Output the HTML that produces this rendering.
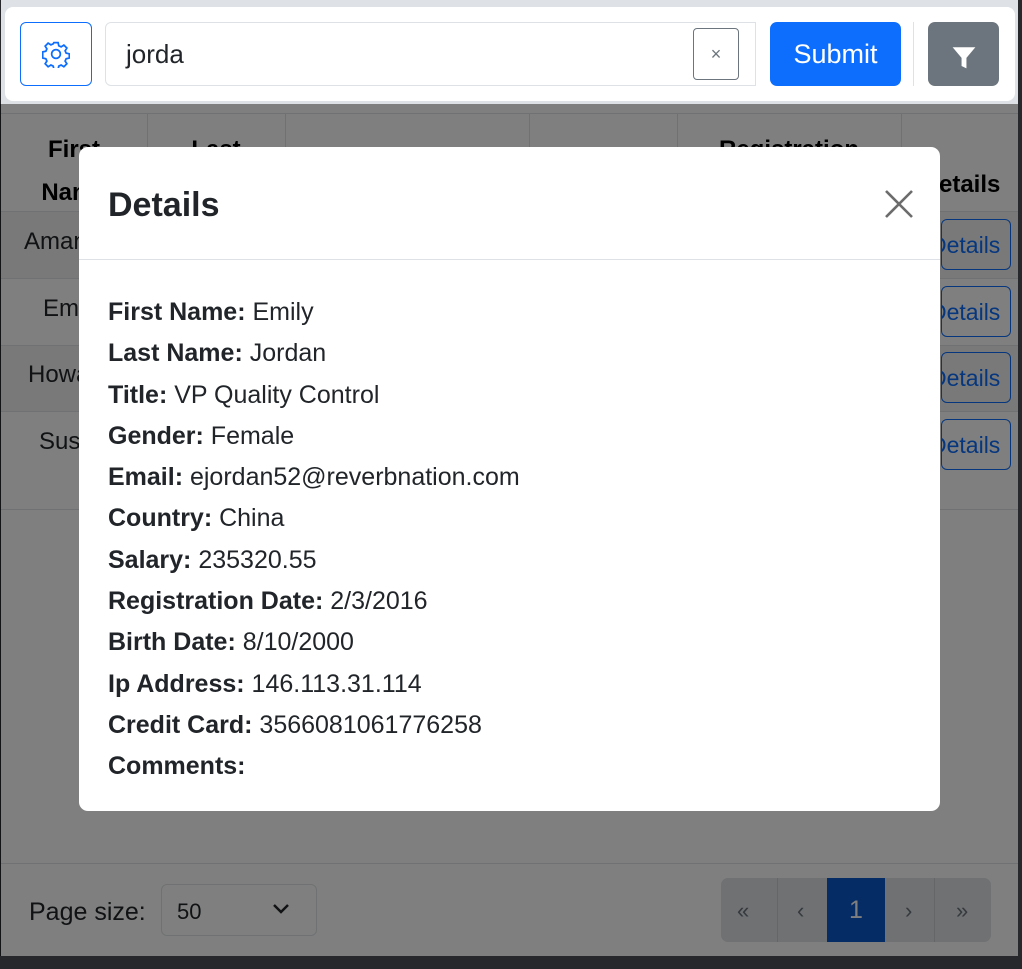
<!DOCTYPE html>
<html><head><meta charset="utf-8"><style>
*{box-sizing:border-box;margin:0;padding:0}
body{width:1022px;height:969px;background:#26282b;font-family:"Liberation Sans",sans-serif;position:relative;overflow:hidden}
.page{position:absolute;left:1px;top:0;width:1017px;height:956px;background:#fff}
.top{position:absolute;left:0;top:0;width:1017px;height:104px;background:#dee2e6;z-index:5}
.topin{position:absolute;left:4px;top:7px;right:3px;height:94px;background:#fff;border-radius:8px}
.abs{position:absolute}
.tbl .v{position:absolute;top:113px;height:98px;width:1px;background:#dee2e6}
.h{position:absolute;left:0;width:1017px;height:1px;background:#dee2e6}
.th{position:absolute;font-weight:bold;font-size:24px;color:#000;text-align:center}
.td{position:absolute;font-size:24px;color:#212529}
.btn{position:absolute;left:940px;width:70px;height:51px;border:1px solid #0d6efd;border-radius:6px;color:#0d6efd;font-size:23px;padding:12px 0 0 0;overflow:hidden;text-indent:-12px}
.ov{position:absolute;left:0;top:104px;width:1018px;height:852px;background:rgba(0,0,0,.5)}
.modal{position:absolute;left:79px;top:147px;width:861px;height:664px;background:#fff;border-radius:9px}
.modal h5{position:absolute;left:29px;top:39px;font-size:34px;font-weight:bold;color:#212529}
.modal .line{position:absolute;left:0;top:112px;width:100%;height:1px;background:#dee2e6}
.body{position:absolute;left:29px;top:145px;font-size:25px;line-height:41.3px;color:#212529}
.body b{font-weight:bold}
</style></head><body>
<div class="page">
  <div class="top"><div class="topin">
    <div class="abs" style="left:15px;top:15px;width:72px;height:64px;border:1px solid #0d6efd;border-radius:6px"></div>
    <svg class="abs" style="left:37px;top:33px" width="28" height="28" viewBox="0 0 16 16" fill="none" stroke="#0d6efd" stroke-width="1"><circle cx="8" cy="8" r="2.5"/><path d="M6.8 1.5h2.4l.4 1.8 1.3.6 1.6-1 1.7 1.7-1 1.6.6 1.3 1.8.4v2.4l-1.8.4-.6 1.3 1 1.6-1.7 1.7-1.6-1-1.3.6-.4 1.8H6.8l-.4-1.8-1.3-.6-1.6 1-1.7-1.7 1-1.6-.6-1.3-1.8-.4V6.8l1.8-.4.6-1.3-1-1.6 1.7-1.7 1.6 1 1.3-.6z"/></svg>
    <div class="abs" style="left:100px;top:15px;width:651px;height:64px;border:1px solid #dee2e6;border-radius:6px 0 0 6px"></div>
    <div class="abs" style="left:121px;top:32px;font-size:26px;color:#212529">jorda</div>
    <div class="abs" style="left:688px;top:21px;width:46px;height:52px;border:1px solid #6c757d;border-radius:4px;color:#6c757d;font-size:18px;text-align:center;line-height:50px">×</div>
    <div class="abs" style="left:765px;top:15px;width:131px;height:64px;background:#0d6efd;border-radius:7px;color:#fff;font-size:27px;text-align:center;line-height:64px">Submit</div>
    <div class="abs" style="left:908px;top:15px;width:1px;height:64px;background:#dee2e6"></div>
    <div class="abs" style="left:923px;top:15px;width:71px;height:64px;background:#6c757d;border-radius:7px"></div>
    <svg class="abs" style="left:946px;top:37px" width="26" height="26" viewBox="0 0 16 16"><path d="M1 2h14l-5.5 6.5V15l-3-1.5V8.5z" fill="#fff"/></svg>
  </div></div>
  <div class="tbl">
    <div class="h" style="top:113px"></div>
    <div class="v" style="left:146px"></div><div class="v" style="left:284px"></div><div class="v" style="left:528px"></div><div class="v" style="left:676px"></div><div class="v" style="left:900px"></div>
    <div class="th" style="left:0;width:146px;top:128px;line-height:43px">First<br>Name</div>
    <div class="th" style="left:146px;width:138px;top:128px;line-height:43px">Last<br>Name</div>
    <div class="th" style="left:676px;width:224px;top:128px;line-height:43px">Registration<br>Date</div>
    <div class="th" style="left:900px;width:120px;top:171px">Details</div>
    <div class="h" style="top:211px"></div>
    <div class="abs" style="left:0;top:212px;width:1017px;height:66px;background:#f2f2f2"></div>
    <div class="h" style="top:278px"></div>
    <div class="abs" style="left:0;top:346px;width:1017px;height:65px;background:#f2f2f2"></div>
    <div class="h" style="top:345px"></div><div class="h" style="top:411px"></div><div class="h" style="top:509px"></div>
    <div class="td" style="left:23px;top:228px">Amanda</div>
    <div class="td" style="left:42px;top:295px">Emily</div>
    <div class="td" style="left:27px;top:361px">Howard</div>
    <div class="td" style="left:38px;top:428px">Susan</div>
    <div class="btn" style="top:219px">Details</div>
    <div class="btn" style="top:286px">Details</div>
    <div class="btn" style="top:352px">Details</div>
    <div class="btn" style="top:419px">Details</div>
    <div class="h" style="top:863px"></div>
    <div class="td" style="left:28px;top:898px;font-size:25px">Page size:</div>
    <div class="abs" style="left:160px;top:884px;width:156px;height:52px;border:1px solid #dee2e6;border-radius:6px;font-size:22px;padding:14px 0 0 15px;color:#212529">50</div>
    <svg class="abs" style="left:270px;top:902px" width="20" height="14" viewBox="0 0 20 14"><path d="M3 3l7 7 7-7" stroke="#212529" stroke-width="2.5" fill="none"/></svg>
    <div class="abs" style="left:720px;top:878px;width:270px;height:64px;border:1px solid #dee2e6;border-radius:7px;background:#dee2e6"></div>
    <div class="abs" style="left:776px;top:878px;width:1px;height:64px;background:#c8ccd0"></div>
    <div class="abs" style="left:933px;top:878px;width:1px;height:64px;background:#c8ccd0"></div>
    <div class="abs" style="left:826px;top:878px;width:58px;height:64px;background:#0a58ca;color:#fff;font-size:25px;text-align:center;line-height:64px">1</div>
    <div class="abs" style="left:736px;top:898px;font-size:22px;color:#6c757d">«</div>
    <div class="abs" style="left:796px;top:898px;font-size:22px;color:#6c757d">‹</div>
    <div class="abs" style="left:904px;top:898px;font-size:22px;color:#6c757d">›</div>
    <div class="abs" style="left:955px;top:898px;font-size:22px;color:#6c757d">»</div>
  </div>
</div>
<div class="ov"></div>
<div class="modal">
  <h5>Details</h5>
  <svg class="abs" style="left:805px;top:42px" width="30" height="30" viewBox="0 0 30 30"><path d="M2 2l26 26M28 2L2 28" stroke="#6c6c6c" stroke-width="2.6"/></svg>
  <div class="line"></div>
  <div class="body">
    <div><b>First Name:</b> Emily</div>
    <div><b>Last Name:</b> Jordan</div>
    <div><b>Title:</b> VP Quality Control</div>
    <div><b>Gender:</b> Female</div>
    <div><b>Email:</b> ejordan52@reverbnation.com</div>
    <div><b>Country:</b> China</div>
    <div><b>Salary:</b> 235320.55</div>
    <div><b>Registration Date:</b> 2/3/2016</div>
    <div><b>Birth Date:</b> 8/10/2000</div>
    <div><b>Ip Address:</b> 146.113.31.114</div>
    <div><b>Credit Card:</b> 3566081061776258</div>
    <div><b>Comments:</b></div>
  </div>
</div>
</body></html>
